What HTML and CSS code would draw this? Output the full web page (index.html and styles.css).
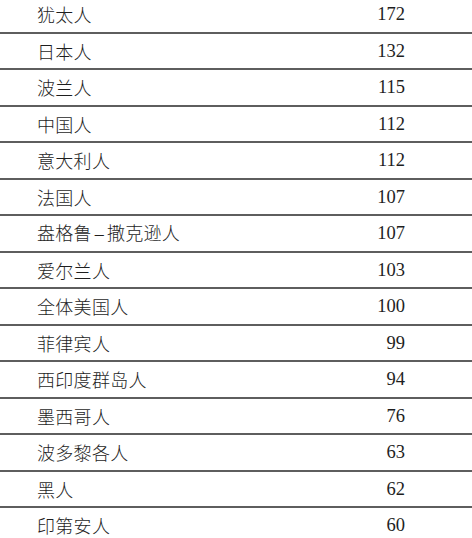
FILE: index.html
```html
<!DOCTYPE html>
<html lang="zh">
<head>
<meta charset="utf-8">
<link rel="stylesheet" href="styles.css">
</head>
<body>
<div class="table">
  <div class="row"><span class="name">犹太人</span><span class="num">172</span></div>
  <div class="row"><span class="name">日本人</span><span class="num">132</span></div>
  <div class="row"><span class="name">波兰人</span><span class="num">115</span></div>
  <div class="row"><span class="name">中国人</span><span class="num">112</span></div>
  <div class="row"><span class="name">意大利人</span><span class="num">112</span></div>
  <div class="row"><span class="name">法国人</span><span class="num">107</span></div>
  <div class="row"><span class="name">盎格鲁<span class="dash">–</span>撒克逊人</span><span class="num">107</span></div>
  <div class="row"><span class="name">爱尔兰人</span><span class="num">103</span></div>
  <div class="row"><span class="name">全体美国人</span><span class="num">100</span></div>
  <div class="row"><span class="name">菲律宾人</span><span class="num">99</span></div>
  <div class="row"><span class="name">西印度群岛人</span><span class="num">94</span></div>
  <div class="row"><span class="name">墨西哥人</span><span class="num">76</span></div>
  <div class="row"><span class="name">波多黎各人</span><span class="num">63</span></div>
  <div class="row"><span class="name">黑人</span><span class="num">62</span></div>
  <div class="row"><span class="name">印第安人</span><span class="num">60</span></div>
</div>
</body>
</html>
```
FILE: styles.css
```css
html, body {
  margin: 0;
  padding: 0;
  background: #ffffff;
  overflow: hidden;
}
.table {
  display: flex;
  flex-direction: column;
  margin-top: -3px;
  width: 472px;
}
.row {
  display: grid;
  grid-template-columns: 250px 155px 1fr;
  align-items: center;
  height: 34.5px;
  border-bottom: 2px solid #5e5e5e;
  color: #1e1e1e;
}
.name {
  padding-left: 37px;
  font-family: "Noto Sans CJK SC", sans-serif;
  font-size: 18px;
  font-weight: 300;
  letter-spacing: 0.3px;
  line-height: 1;
}
.dash {
  display: inline-block;
  width: 15px;
  text-align: center;
  font-family: "Liberation Serif", serif;
}
.num {
  text-align: right;
  font-family: "Liberation Serif", serif;
  font-size: 18.5px;
  line-height: 1;
}
```
